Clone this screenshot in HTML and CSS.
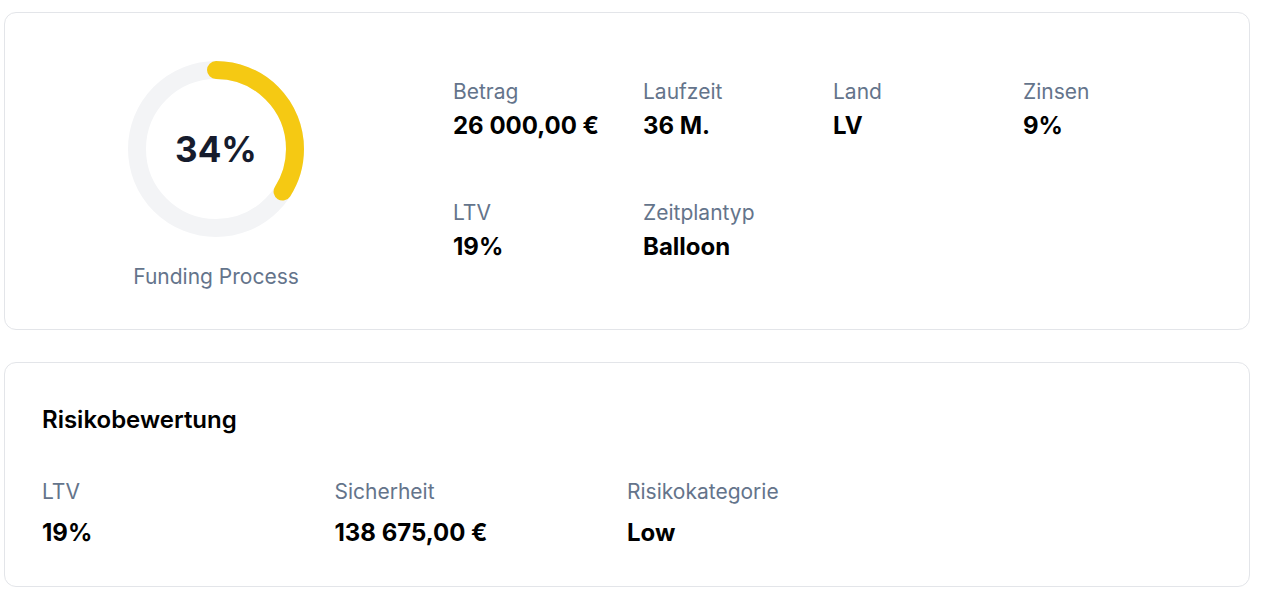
FILE: index.html
```html
<!DOCTYPE html>
<html lang="de">
<head>
<meta charset="utf-8">
<link rel="stylesheet" href="styles.css">
</head>
<body>
<div class="page">
  <section class="card overview">
    <div class="progress">
      <div class="donut">
        <svg width="176" height="176" viewBox="0 0 176 176">
          <circle cx="88" cy="88" r="79" fill="none" stroke="#f3f4f6" stroke-width="18"/>
          <circle cx="88" cy="88" r="79" fill="none" stroke="#f5c913" stroke-width="18" stroke-linecap="round" stroke-dasharray="168.77 496.37" transform="rotate(-90 88 88)"/>
        </svg>
        <div class="donut-value">34%</div>
      </div>
      <div class="progress-label">Funding Process</div>
    </div>
    <div class="facts">
      <div class="fact"><div class="label">Betrag</div><div class="value">26 000,00 €</div></div>
      <div class="fact"><div class="label">Laufzeit</div><div class="value">36 M.</div></div>
      <div class="fact"><div class="label">Land</div><div class="value">LV</div></div>
      <div class="fact"><div class="label">Zinsen</div><div class="value">9%</div></div>
      <div class="fact"><div class="label">LTV</div><div class="value">19%</div></div>
      <div class="fact"><div class="label">Zeitplantyp</div><div class="value">Balloon</div></div>
    </div>
  </section>
  <section class="card risk">
    <h2 class="risk-title">Risikobewertung</h2>
    <div class="risk-grid">
      <div class="fact"><div class="label">LTV</div><div class="value">19%</div></div>
      <div class="fact"><div class="label">Sicherheit</div><div class="value">138 675,00 €</div></div>
      <div class="fact"><div class="label">Risikokategorie</div><div class="value">Low</div></div>
    </div>
  </section>
</div>
</body>
</html>
```
FILE: styles.css
```css
* { box-sizing: border-box; }
html, body { margin: 0; padding: 0; background: #ffffff; }
body {
  font-family: Inter, "Noto Sans", "Liberation Sans", sans-serif;
  color: #000;
}
.page {
  width: 1246px;
  margin: 12px 0 0 4px;
  display: flex;
  flex-direction: column;
  gap: 32px;
}
.card {
  border: 1px solid #e3e5e9;
  border-radius: 12px;
  background: #fff;
}
.overview {
  height: 318px;
  display: flex;
  padding: 48px 0 0 41px;
}
.progress {
  flex: 0 0 auto;
  width: 340px;
  display: flex;
  flex-direction: column;
  align-items: center;
}
.donut {
  position: relative;
  width: 176px;
  height: 176px;
}
.donut svg { display: block; }
.donut-value {
  position: absolute;
  inset: 0;
  display: flex;
  align-items: center;
  justify-content: center;
  font-size: 35px;
  font-weight: 700;
  color: #161c2d;
}
.progress-label {
  margin-top: 26px;
  font-size: 21px;
  line-height: 28px;
  color: #64748b;
}
.facts {
  flex: 0 0 auto;
  margin-left: 67px;
  padding-top: 17px;
  display: grid;
  grid-template-columns: repeat(4, 190px);
  row-gap: 56px;
  align-content: start;
}
.label {
  font-size: 21px;
  line-height: 28px;
  color: #64748b;
}
.value {
  margin-top: 3px;
  font-size: 24px;
  line-height: 34px;
  font-weight: 700;
  color: #000;
}
.risk {
  height: 225px;
  padding: 41px 37px 0 37px;
}
.risk-title {
  margin: 0;
  font-size: 24px;
  line-height: 32px;
  font-weight: 600;
  color: #000;
}
.risk-grid {
  margin-top: 42px;
  display: grid;
  grid-template-columns: repeat(3, 292.5px);
}
.risk-grid .value { margin-top: 10px; }
```
